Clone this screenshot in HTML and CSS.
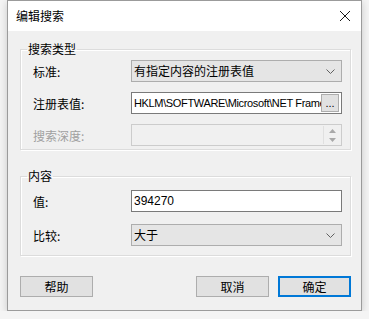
FILE: index.html
```html
<!DOCTYPE html>
<html lang="zh-CN">
  <head>
    <meta charset="UTF-8" />
    <title>编辑搜索</title>
    <link rel="stylesheet" href="styles.css">
  </head>
  <body>
    <div class="window">
      <div class="titlebar">
        <span class="title">编辑搜索</span>
        <span class="close">
          <svg width="12" height="12" viewBox="0 0 12 12">
            <path d="M1 1 L11 11 M11 1 L1 11" stroke="#1a1a1a" stroke-width="1" fill="none" />
          </svg>
        </span>
      </div>

      <div class="client">
        <fieldset class="group group-type">
          <legend>搜索类型</legend>
          <div class="row">
            <label>标准:</label>
            <div class="combo">
              <span class="combo-text">有指定内容的注册表值</span>
              <svg class="chevron" width="9" height="5" viewBox="0 0 9 5">
                <path d="M0.5 0.5 L4.5 4.5 L8.5 0.5" stroke="#606060" fill="none" />
              </svg>
            </div>
          </div>
          <div class="row">
            <label>注册表值:</label>
            <div class="edit with-button">
              <span class="edit-text path">HKLM\SOFTWARE\Microsoft\NET Framework Setup\NDP\v4\Full</span>
              <button class="browse">...</button>
            </div>
          </div>
          <div class="row">
            <label class="disabled">搜索深度:</label>
            <div class="edit spin disabled-field">
              <span class="edit-text"></span>
              <div class="spin-buttons">
                <svg width="7" height="4" viewBox="0 0 7 4"><path d="M0 4 L3.5 0 L7 4 Z" fill="#a8a8a8" /></svg>
                <svg width="7" height="4" viewBox="0 0 7 4"><path d="M0 0 L3.5 4 L7 0 Z" fill="#a8a8a8" /></svg>
              </div>
            </div>
          </div>
        </fieldset>

        <fieldset class="group group-content">
          <legend>内容</legend>
          <div class="row">
            <label>值:</label>
            <div class="edit">
              <span class="edit-text">394270</span>
            </div>
          </div>
          <div class="row">
            <label>比较:</label>
            <div class="combo">
              <span class="combo-text">大于</span>
              <svg class="chevron" width="9" height="5" viewBox="0 0 9 5">
                <path d="M0.5 0.5 L4.5 4.5 L8.5 0.5" stroke="#606060" fill="none" />
              </svg>
            </div>
          </div>
        </fieldset>

        <div class="buttons">
          <button class="btn">帮助</button>
          <span class="spacer"></span>
          <button class="btn">取消</button>
          <button class="btn default">确定</button>
        </div>
      </div>
    </div>
  </body>
</html>
```

FILE: styles.css
```css
body {
  margin: 0;
  padding: 0 0 0 7px;
  background-color: #f4f4f4;
  font-family: "Liberation Sans", "Noto Sans CJK SC", sans-serif;
  font-size: 12px;
  color: #000;
}

.window {
  width: 353px;
  border: 1px solid #9b9b9b;
  background-color: #f0f0f0;
  box-shadow: 0 2px 8px rgba(0, 0, 0, 0.18);
}

.titlebar {
  height: 30px;
  background-color: #fff;
  display: flex;
  align-items: center;
  justify-content: space-between;
  padding: 0 9px 0 8px;
}

.title {
  font-family: "Noto Sans CJK SC", sans-serif;
  font-size: 12px;
  line-height: 14px;
  color: #000;
}

.close {
  display: flex;
  padding-right: 1px;
}

.client {
  padding: 11px 10px 13px 12px;
}

.group {
  margin: 0;
  padding: 4px 8px 3px 12px;
  border: 1px solid #dcdcdc;
  box-shadow: inset 1px 1px 0 #fff, 1px 1px 0 #fff;
  display: flex;
  flex-direction: column;
  gap: 10px;
}

.group legend {
  padding: 0 1px;
  margin-left: -6px;
  font-family: "Noto Sans CJK SC", sans-serif;
  font-size: 12px;
  line-height: 14px;
}

.group-content {
  margin-top: 19px;
  padding-top: 7px;
  padding-bottom: 9px;
  gap: 12px;
}

.row {
  display: grid;
  grid-template-columns: 98px 211px;
  align-items: center;
  height: 22px;
}

.row label {
  font-family: "Noto Sans CJK SC", sans-serif;
  line-height: 14px;
  padding-top: 2px;
}

.row label.disabled {
  color: #a0a0a0;
}

.combo {
  box-sizing: border-box;
  height: 22px;
  border: 1px solid #adadad;
  background-color: #e5e5e5;
  display: flex;
  align-items: center;
  justify-content: space-between;
  padding: 0 6px 0 2px;
}

.combo-text {
  font-family: "Noto Sans CJK SC", sans-serif;
  line-height: 14px;
}

.edit {
  box-sizing: border-box;
  height: 22px;
  border: 1px solid #7a7a7a;
  background-color: #fff;
  display: flex;
  align-items: center;
  padding-left: 2px;
  overflow: hidden;
}

.edit-text {
  flex: 1;
  min-width: 0;
  white-space: nowrap;
  overflow: hidden;
  line-height: 14px;
}

.edit-text.path {
  font-size: 11px;
  letter-spacing: -0.35px;
}

.with-button {
  padding-right: 2px;
}

.browse {
  flex: none;
  width: 18px;
  height: 18px;
  margin: 0;
  padding: 0 0 3px;
  border: 1px solid #adadad;
  background-color: #e1e1e1;
  font-family: "Liberation Sans", sans-serif;
  font-size: 11px;
  line-height: 10px;
  display: flex;
  align-items: flex-end;
  justify-content: center;
  color: #000;
}

.disabled-field {
  border-color: #cccccc;
  background-color: #f0f0f0;
  padding-right: 1px;
}

.spin-buttons {
  width: 16px;
  height: 18px;
  display: flex;
  flex-direction: column;
  align-items: center;
  justify-content: space-around;
  border-left: 1px solid #e0e0e0;
}

.buttons {
  display: flex;
  gap: 9px;
  margin-top: 20px;
}

.spacer {
  flex: 1;
}

.btn {
  box-sizing: border-box;
  width: 73px;
  height: 21px;
  margin: 0;
  padding: 0;
  border: 1px solid #adadad;
  background-color: #e1e1e1;
  font-family: "Noto Sans CJK SC", sans-serif;
  font-size: 12px;
  line-height: 14px;
  color: #000;
}

.btn.default {
  border: 2px solid #0078d7;
}
```
